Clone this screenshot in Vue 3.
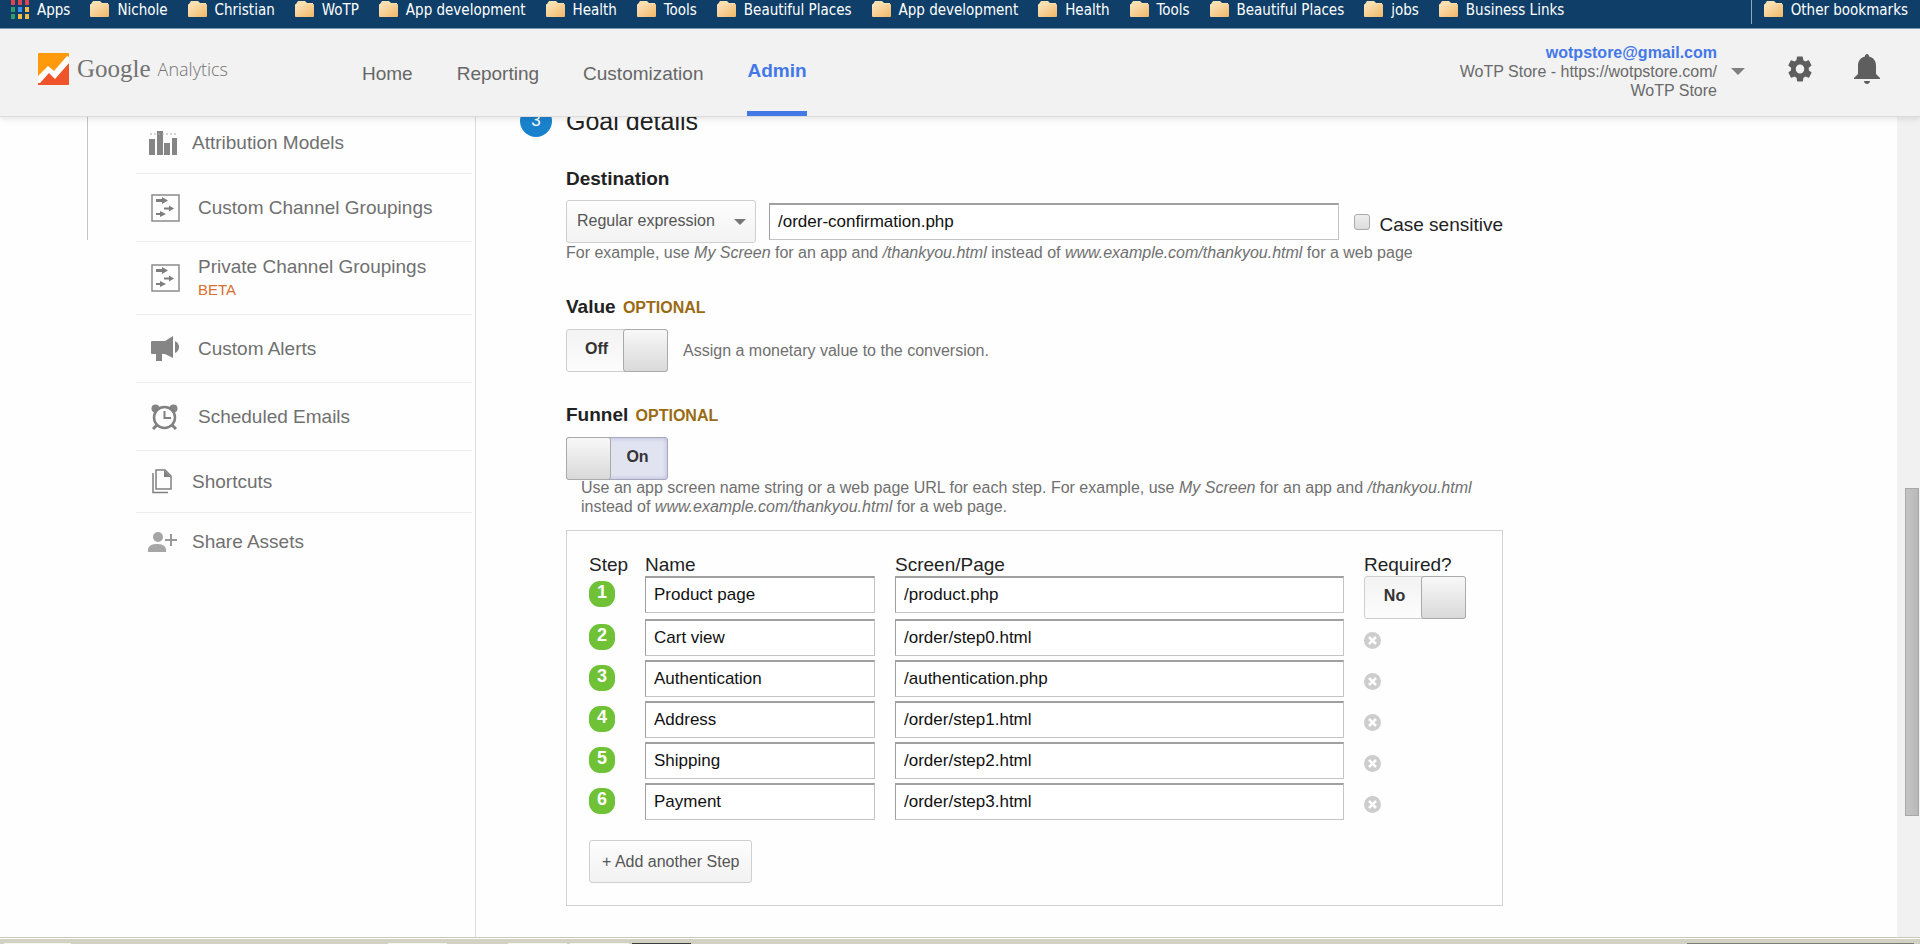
<script setup>
import { ref } from 'vue'

const bookmarks = [
  'Nichole', 'Christian', 'WoTP', 'App development', 'Health', 'Tools', 'Beautiful Places',
  'App development', 'Health', 'Tools', 'Beautiful Places', 'jobs', 'Business Links',
]
const dots = ['#e0434c', '#e0434c', '#e0434c', '#2f9e6a', '#3f8df0', '#f2bb45', '#2f9e6a', '#f2bb45', '#f2bb45']

const navLinks = ['Home', 'Reporting', 'Customization', 'Admin']

const assets = [
  { label: 'Attribution Models', icon: 'bars', size: 'short' },
  { label: 'Custom Channel Groupings', icon: 'channel', size: 'tall', wide: true },
  { label: 'Private Channel Groupings', icon: 'channel', size: 'double', wide: true, beta: true },
  { label: 'Custom Alerts', icon: 'horn', size: 'tall', wide: true },
  { label: 'Scheduled Emails', icon: 'clock', size: 'tall', wide: true },
  { label: 'Shortcuts', icon: 'pages', size: 'short' },
  { label: 'Share Assets', icon: 'share', size: 'last' },
]

const matchType = ref('Regular expression')
const destination = ref('/order-confirmation.php')
const caseSensitive = ref(false)
const valueOn = ref(false)
const funnelOn = ref(true)
const firstRequired = ref(false)

const steps = ref([
  { name: 'Product page', page: '/product.php' },
  { name: 'Cart view', page: '/order/step0.html' },
  { name: 'Authentication', page: '/authentication.php' },
  { name: 'Address', page: '/order/step1.html' },
  { name: 'Shipping', page: '/order/step2.html' },
  { name: 'Payment', page: '/order/step3.html' },
])
const addStep = () => steps.value.push({ name: '', page: '' })
const removeStep = (i) => steps.value.splice(i, 1)
</script>

<template>
  <div class="app">
    <nav class="bookmarks" aria-label="Bookmarks">
      <a class="bookmark apps" href="#">
        <svg width="18" height="19" viewBox="0 0 18 19">
          <rect v-for="(c, i) in dots" :key="i" :x="(i % 3) * 7" :y="Math.floor(i / 3) * 7" width="4" height="5" :fill="c" />
        </svg>
        Apps
      </a>
      <a v-for="(b, i) in bookmarks" :key="i" class="bookmark" href="#">
        <svg class="folder" width="19" height="16" viewBox="0 0 19 16">
          <path d="M1 3 L3 0 H10 L12 2 H18 V5 H1Z" fill="#f7dfae" />
          <rect x="0" y="3" width="19" height="13" rx="1" fill="url(#folderFill)" />
        </svg>
        {{ b }}
      </a>
      <a class="bookmark other" href="#">
        <svg class="folder" width="19" height="16" viewBox="0 0 19 16">
          <defs>
            <linearGradient id="folderFill" x1="0" y1="0" x2="1" y2="1">
              <stop offset="0" stop-color="#fde6c0" />
              <stop offset="1" stop-color="#f0b765" />
            </linearGradient>
          </defs>
          <path d="M1 3 L3 0 H10 L12 2 H18 V5 H1Z" fill="#f7dfae" />
          <rect x="0" y="3" width="19" height="13" rx="1" fill="url(#folderFill)" />
        </svg>
        Other bookmarks
      </a>
    </nav>

    <header class="header">
      <a class="brand" href="#">
        <svg width="31" height="32" viewBox="0 0 31 32">
          <rect width="31" height="32" rx="1" fill="#ff9a0c" />
          <path d="M0 29 L11 17 L16 24 L31 10 V31 Q31 32 30 32 H1 Q0 32 0 31Z" fill="#f0542a" />
          <path d="M0 23 L10 13 L16 18 L29 3 L31 4 V10 L17 26 L11 20 L2 30 L0 30Z" fill="#fff" />
        </svg>
        <span class="google">Google</span>
        <span class="analytics">Analytics</span>
      </a>
      <nav class="nav" aria-label="Main">
        <a v-for="l in navLinks" :key="l" href="#" :class="{ active: l === 'Admin' }">{{ l }}</a>
      </nav>
      <button class="account" type="button">
        <span class="account-text">
          <strong>wotpstore@gmail.com</strong>
          <span>WoTP Store - https://wotpstore.com/</span>
          <span>WoTP Store</span>
        </span>
        <svg width="14" height="7" viewBox="0 0 14 7"><path d="M0 0H14L7 7Z" fill="#808080" /></svg>
      </button>
      <button class="icon-button" type="button" aria-label="Settings">
        <svg width="26" height="28" viewBox="1 1 22 22" preserveAspectRatio="none">
          <path fill="#5e5e5e" d="M19.4 13c0-.3.1-.6.1-1s0-.7-.1-1l2.1-1.6c.2-.2.2-.4.1-.6l-2-3.5c-.1-.2-.4-.3-.6-.2l-2.5 1c-.5-.4-1.1-.7-1.7-1l-.4-2.600c0-.2-.2-.4-.5-.4h-4c-.2 0-.5.2-.5.4l-.4 2.6c-.6.3-1.2.6-1.7 1l-2.5-1c-.2-.1-.5 0-.6.2l-2 3.5c-.1.2-.1.5.1.6L4.500 11c0 .3-.1.6-.1 1s0 .7.1 1l-2.1 1.6c-.2.2-.2.4-.1.6l2 3.5c.1.2.4.3.6.2l2.500-1c.5.4 1.1.7 1.7 1l.4 2.6c0 .2.2.4.5.4h4c.3 0 .5-.2.5-.4l.4-2.6c.6-.3 1.2-.6 1.7-1l2.5 1c.2.1.5 0 .6-.2l2-3.5c.1-.2.1-.5-.1-.6zM12 15.600a3.600 3.600 0 1 1 0-7.200 3.600 3.600 0 0 1 0 7.200z" />
        </svg>
      </button>
      <button class="icon-button" type="button" aria-label="Notifications">
        <svg width="26" height="30" viewBox="0 0 26 30">
          <path fill="#5e5e5e" d="M13 0c1.300 0 2 1 2 2.500 4.500 1 7 4.500 7 9V20l4 4v1H0v-1l4-4v-8.500c0-4.500 2.500-8 7-9C11 1 11.700 0 13 0zM10 27h6c0 1.600-1.300 3-3 3s-3-1.400-3-3z" />
        </svg>
      </button>
    </header>

    <div class="body">
      <aside class="sidebar">
        <div class="tree-line"></div>
        <ul class="assets">
          <li v-for="a in assets" :key="a.label" :class="a.size">
            <a href="#" :class="{ wide: a.wide }">
              <span class="slot">
                <svg v-if="a.icon === 'bars'" width="30" height="25" viewBox="0 0 30 25" fill="#858585">
                  <rect x="1" y="9" width="6" height="16" /><rect x="9" y="1" width="6" height="24" />
                  <rect x="16" y="13" width="6" height="12" /><rect x="24" y="8" width="5" height="17" />
                  <path d="M2 4H28" stroke="#aaa" stroke-dasharray="2 2" />
                </svg>
                <svg v-else-if="a.icon === 'channel'" width="29" height="28" viewBox="0 0 29 28">
                  <rect x="1" y="1" width="27" height="26" fill="none" stroke="#8c8c8c" stroke-width="1.5" />
                  <g fill="#7d7d7d">
                    <path d="M5 5h6V3l6 3.500-6 3.500V8H5Z" />
                    <path d="M13 13.500h5v-2l5 3-5 3v-2h-5Z" />
                    <path d="M5 19h4v-2l6 3-6 3v-2H5Z" />
                  </g>
                </svg>
                <svg v-else-if="a.icon === 'horn'" width="29" height="26" viewBox="0 0 29 26" fill="#858585">
                  <path d="M0 6 Q0 5 1 5H14L22 0V22L14 18H11V25H5V18H1Q0 18 0 17Z" /><path d="M24 5q4 2 4 6t-4 6Z" />
                </svg>
                <svg v-else-if="a.icon === 'clock'" width="28" height="26" viewBox="0 0 28 26">
                  <circle cx="4.500" cy="4.500" r="4" fill="#858585" /><circle cx="22.500" cy="4.500" r="4" fill="#858585" />
                  <g fill="none" stroke="#808080">
                    <circle cx="13.500" cy="13.500" r="10.500" fill="#fefefe" stroke-width="2.500" />
                    <path d="M13.500 7V14H20" stroke-width="2" />
                    <path d="M6 21L2 25M21 21L25 25" stroke-width="3" />
                  </g>
                </svg>
                <svg v-else-if="a.icon === 'pages'" width="29" height="25" viewBox="0 0 29 25">
                  <path d="M8 1H17L23 7V20H8ZM5 4V23.500H20" fill="none" stroke="#808080" stroke-width="1.500" />
                  <path d="M16 1V8H23Z" fill="#808080" />
                </svg>
                <svg v-else width="29" height="20" viewBox="0 0 29 20">
                  <g fill="#a6a6a6">
                    <circle cx="10" cy="5" r="5" /><path d="M0 20V17Q1 12 9 12T18 17V20Z" />
                    <path d="M22 2h2v5h5v2h-5v5h-2V9h-5V7h5Z" fill="#999" />
                  </g>
                </svg>
              </span>
              <span class="asset-text">{{ a.label }}<small v-if="a.beta">BETA</small></span>
            </a>
          </li>
        </ul>
      </aside>

      <main class="main">
        <h2 class="title"><span class="badge-blue">3</span>Goal details</h2>

        <form class="form" @submit.prevent>
          <section class="destination">
            <h3><label for="dest">Destination</label></h3>
            <div class="dest-row">
              <span class="select-wrap">
                <select v-model="matchType" aria-label="Match type">
                  <option>Equals to</option>
                  <option>Begins with</option>
                  <option>Regular expression</option>
                </select>
                <svg class="caret" width="12" height="6" viewBox="0 0 12 6"><path d="M0 0H12L6 6Z" fill="#777" /></svg>
              </span>
              <input id="dest" v-model="destination" class="field" type="text" />
              <label class="case"><input v-model="caseSensitive" type="checkbox" /><span>Case sensitive</span></label>
            </div>
            <p class="help">
              For example, use <em>My Screen</em> for an app and <em>/thankyou.html</em> instead of
              <em>www.example.com/thankyou.html</em> for a web page
            </p>
          </section>

          <section class="value">
            <h3>Value <span class="optional">OPTIONAL</span></h3>
            <div class="toggle-row">
              <button class="toggle" :class="{ on: valueOn }" type="button" role="switch" :aria-checked="valueOn" aria-label="Value" @click="valueOn = !valueOn">
                <span class="state">{{ valueOn ? 'On' : 'Off' }}</span><span class="knob"></span>
              </button>
              <p class="help">Assign a monetary value to the conversion.</p>
            </div>
          </section>

          <section class="funnel">
            <h3>Funnel <span class="optional">OPTIONAL</span></h3>
            <button class="toggle" :class="{ on: funnelOn }" type="button" role="switch" :aria-checked="funnelOn" aria-label="Funnel" @click="funnelOn = !funnelOn">
              <span class="state">{{ funnelOn ? 'On' : 'Off' }}</span><span class="knob"></span>
            </button>
            <p class="help funnel-help">
              Use an app screen name string or a web page URL for each step. For example, use <em>My Screen</em> for an app and
              <em>/thankyou.html</em> instead of <em>www.example.com/thankyou.html</em> for a web page.
            </p>

            <div v-if="funnelOn" class="panel">
              <table>
                <thead>
                  <tr>
                    <th class="col-step">Step</th>
                    <th class="col-name">Name</th>
                    <th>Screen/Page</th>
                    <th class="col-required">Required?</th>
                  </tr>
                </thead>
                <tbody>
                  <tr v-for="(s, i) in steps" :key="i">
                    <td><span class="badge-green">{{ i + 1 }}</span></td>
                    <td class="pad"><input v-model="s.name" class="field" type="text" :aria-label="`Step ${i + 1} name`" /></td>
                    <td class="pad"><input v-model="s.page" class="field" type="text" :aria-label="`Step ${i + 1} screen or page`" /></td>
                    <td>
                      <button v-if="i === 0" class="toggle" :class="{ on: firstRequired }" type="button" role="switch" :aria-checked="firstRequired" aria-label="Required" @click="firstRequired = !firstRequired">
                        <span class="state">{{ firstRequired ? 'Yes' : 'No' }}</span><span class="knob"></span>
                      </button>
                      <button v-else class="remove" type="button" :aria-label="`Remove step ${i + 1}`" @click="removeStep(i)">
                        <svg width="17" height="17" viewBox="0 0 17 17">
                          <circle cx="8.500" cy="8.500" r="8.500" fill="#cdcdcd" />
                          <path d="M5 5L12 12M12 5L5 12" stroke="#fff" stroke-width="2.500" />
                        </svg>
                      </button>
                    </td>
                  </tr>
                </tbody>
              </table>
              <button class="add" type="button" @click="addStep">+ Add another Step</button>
            </div>
          </section>
        </form>
      </main>

      <div class="scrollbar" aria-hidden="true"><div class="thumb"></div></div>
    </div>

    <footer class="taskbar" aria-hidden="true">
      <span class="task start"></span>
      <span class="task lone"></span><span class="task"></span><span class="task"></span>
      <span class="task dark"></span>
      <span class="tray"></span>
    </footer>
  </div>
</template>

<style>
body {
  background: #fefefe;
}
</style>

<style scoped>
* {
  box-sizing: border-box;
}
.app {
  display: flex;
  flex-direction: column;
  height: 100vh;
  overflow: hidden;
  font-family: "Liberation Sans", Arial, sans-serif;
  color: #222;
}
a {
  color: inherit;
  text-decoration: none;
}
button,
input,
select {
  font-family: inherit;
  margin: 0;
}
button {
  cursor: pointer;
}

/* bookmarks bar */
.bookmarks {
  flex: none;
  display: flex;
  gap: 20px;
  height: 29px;
  padding: 0 12px 0 11px;
  background: #0f3f69;
  border-bottom: 1px solid #7d98b3;
  color: #fff;
  font: 15px/20px "DejaVu Sans Condensed", "Noto Sans", sans-serif;
  white-space: nowrap;
}
.bookmark {
  display: flex;
  gap: 8px;
  height: 20px;
}
.folder {
  margin-top: 1px;
}
.other {
  height: 24px;
  margin-left: auto;
  padding-left: 12px;
  border-left: 1px solid #8fa6bd;
}

/* header */
.header {
  flex: none;
  position: relative;
  z-index: 1;
  display: flex;
  align-items: stretch;
  height: 88px;
  padding: 0 40px 0 38px;
  background: #f2f2f2;
  border-bottom: 1px solid #dcdcdc;
  box-shadow: 0 2px 6px rgba(0, 0, 0, 0.1);
}
.brand {
  display: flex;
  align-items: center;
  width: 324px;
  padding-bottom: 8px;
  color: #737373;
}
.google {
  margin-left: 8px;
  font: 25px/32px "Liberation Serif", serif;
}
.analytics {
  margin-left: 7px;
  font: 300 18px/32px "Open Sans", sans-serif;
}
.nav {
  display: flex;
  gap: 44px;
  font-size: 19px;
  color: #666;
}
.nav a {
  display: flex;
  align-items: center;
  padding-top: 2px;
}
.nav .active {
  color: #4378e8;
  font-weight: bold;
  border-bottom: 5px solid #4378e8;
}
.account {
  display: flex;
  align-items: center;
  gap: 14px;
  margin-left: auto;
  padding: 0 1px 3px 0;
  border: 0;
  background: none;
  color: #6a6a6a;
  font-size: 16px;
  line-height: 19px;
  text-align: right;
}
.account-text {
  display: flex;
  flex-direction: column;
}
.account strong {
  color: #4378e8;
}
.icon-button {
  margin-left: 41px;
  padding: 0 0 7px;
  border: 0;
  background: none;
  display: flex;
  align-items: center;
}

/* page body */
.body {
  flex: 1;
  display: flex;
  min-height: 0;
  overflow: hidden;
}
.sidebar {
  flex: none;
  display: flex;
  width: 476px;
  border-right: 1px solid #dcdcdc;
}
.tree-line {
  width: 88px;
  height: 123px;
  border-right: 1px solid #c4c4c4;
}
.assets {
  flex: 1;
  list-style: none;
  margin: -5px 3px 0 48px;
  padding: 0;
  color: #707070;
  font-size: 19px;
  line-height: 24px;
}
.assets li {
  display: flex;
  height: 62px;
  border-bottom: 1px solid #ededed;
}
.assets .last {
  height: 58px;
  border-bottom: 0;
}
.assets .tall {
  height: 68px;
}
.assets .double {
  height: 73px;
}
.assets a {
  flex: 1;
  display: flex;
  align-items: center;
  padding-left: 12px;
}
.assets .wide {
  padding-left: 15px;
}
.slot {
  width: 44px;
  display: flex;
}
.wide .slot {
  width: 47px;
}
.asset-text {
  display: flex;
  flex-direction: column;
}
.asset-text small {
  color: #d8702f;
  font-size: 15px;
  line-height: 22px;
}

.main {
  flex: 1;
  min-width: 0;
  margin-top: -20px;
  padding: 0 24px 0 44px;
}
.title {
  display: flex;
  align-items: center;
  gap: 14px;
  height: 48px;
  margin: 0;
  font-size: 25px;
  font-weight: normal;
}
.badge-blue {
  width: 32px;
  height: 32px;
  border-radius: 50%;
  background: #1a82cc;
  color: #fff;
  font-size: 17px;
  line-height: 32px;
  text-align: center;
}
.form {
  max-width: 983px;
  padding-left: 46px;
}
h3 {
  margin: 0 0 9px;
  font-size: 19px;
  line-height: 24px;
}
.optional {
  margin-left: 2px;
  color: #9a6b14;
  font-size: 16px;
}
.destination {
  margin-top: 22px;
}
.value {
  margin-top: 33px;
}
.funnel {
  margin-top: 31px;
}
.help {
  margin: 0;
  color: #707070;
  font-size: 16px;
  line-height: 19px;
}
.dest-row {
  display: flex;
  align-items: center;
}
.select-wrap {
  position: relative;
  display: flex;
  width: 190px;
  margin-right: 13px;
}
.caret {
  position: absolute;
  right: 10px;
  top: 19px;
  pointer-events: none;
}
select {
  appearance: none;
  width: 100%;
  height: 43px;
  padding: 0 24px 2px 10px;
  border: 1px solid #cfcfcf;
  border-radius: 3px;
  background: linear-gradient(#fdfdfd, #f3f3f3);
  color: #555;
  font-size: 16px;
}
.field {
  flex: 1;
  min-width: 0;
  width: 100%;
  height: 37px;
  padding: 0 8px;
  border: 1px solid #c4c4c4;
  border-top: 2px solid #a0a0a0;
  border-left-color: #a0a0a0;
  background: #fff;
  color: #111;
  font-size: 17px;
}
.case {
  display: flex;
  align-items: center;
  gap: 9px;
  margin-left: 15px;
  font-size: 19px;
  line-height: 24px;
  white-space: nowrap;
}
.case span {
  padding-top: 6px;
}
.case input {
  appearance: none;
  width: 16px;
  height: 16px;
  border: 1px solid #aaa;
  border-radius: 3px;
  background: linear-gradient(#eee, #dcdcdc);
}
.case input:checked {
  background: #4378e8;
}
.toggle-row {
  display: flex;
  align-items: center;
  gap: 15px;
}
.toggle {
  display: flex;
  width: 102px;
  height: 43px;
  padding: 0;
  border: 1px solid #cfcfcf;
  border-radius: 3px;
  background: linear-gradient(#f3f3f3, #fcfcfc);
  color: #333;
  font-size: 16px;
  font-weight: bold;
}
.state {
  flex: 1;
  align-self: center;
  padding: 0 2px 4px 4px;
  text-align: center;
}
.knob {
  width: 45px;
  align-self: stretch;
  margin: -1px;
  border: 1px solid #aaa;
  border-radius: 3px;
  background: linear-gradient(#f8f8f8, #d9d9d9);
}
.toggle.on {
  flex-direction: row-reverse;
  border-color: #a8a8bc;
  background: #e1e4f0;
  box-shadow: inset 0 0 5px #b4b6dc;
}
.toggle.on .state {
  padding-left: 0;
}
.funnel-help {
  margin: -2px 0 14px;
  padding-left: 15px;
}
.panel {
  padding: 23px 34px 22px 22px;
  border: 1px solid #d2d2d2;
}
table {
  width: 100%;
  table-layout: fixed;
  border-collapse: collapse;
}
th {
  padding: 0;
  font-size: 19px;
  font-weight: normal;
  line-height: 22px;
  text-align: left;
}
td {
  height: 41px;
  padding: 0;
  vertical-align: top;
}
td.pad {
  padding-right: 20px;
}
.col-step {
  width: 56px;
}
.col-name {
  width: 250px;
}
.col-required {
  width: 104px;
}
.badge-green {
  display: block;
  width: 26px;
  height: 26px;
  margin-top: 5px;
  border-radius: 11px;
  background: #6fc135;
  color: #fff;
  font-size: 18px;
  font-weight: bold;
  line-height: 22px;
  text-align: center;
}
.remove {
  display: flex;
  margin-top: 13px;
  padding: 0;
  border: 0;
  background: none;
}
.add {
  display: block;
  height: 43px;
  margin-top: 16px;
  padding: 0 12px;
  border: 1px solid #cfcfcf;
  border-radius: 3px;
  background: linear-gradient(#fdfdfd, #f2f2f2);
  color: #555;
  font-size: 16px;
}

/* scrollbar and window edge */
.scrollbar {
  flex: none;
  width: 23px;
  padding: 371px 1px 0 8px;
  background: #f1f1f1;
}
.thumb {
  height: 328px;
  border: 1px solid #a8a8a8;
  background: linear-gradient(90deg, #c4c4c4, #b8b8b8);
}
.taskbar {
  flex: none;
  display: flex;
  align-items: flex-end;
  gap: 3px;
  height: 7px;
  padding: 0 6px 0 4px;
  background: #d3d0c4;
  border-top: 1px solid #c9c8b6;
  box-shadow: inset 0 1px #fff;
}
.task {
  width: 59px;
  height: 1px;
  background: #f4f4ee;
}
.start {
  width: 67px;
  margin-right: 314px;
}
.lone {
  margin-right: 58px;
}
.dark {
  background: #3c3c3c;
}
.tray {
  width: 227px;
  height: 1px;
  margin-left: auto;
  background: #7c7c76;
}
</style>
